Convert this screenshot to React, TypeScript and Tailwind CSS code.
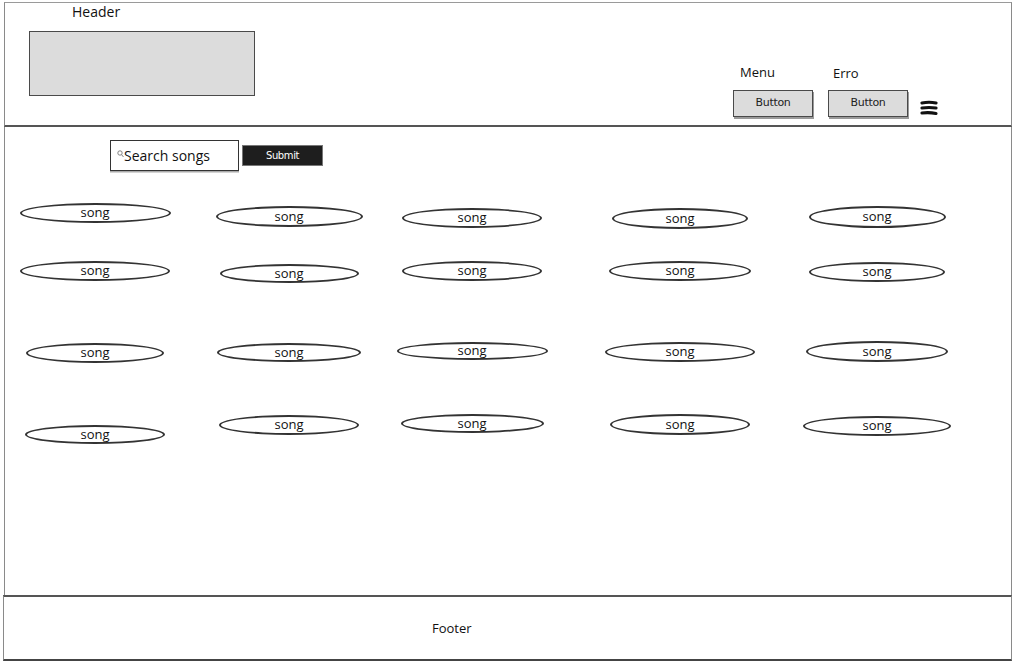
import React from "react";

type Song = { w: string; h: string; mt: string };

// cell widths chosen so each column lines up with the sketch
const cells = ["w-[180px]", "w-[208px]", "w-[158px]", "w-[258px]", "w-[136px]"];

const rows: { h: string; songs: Song[] }[] = [
	{
		h: "h-[58px]",
		songs: [
			{ w: "w-[151px]", h: "h-[20px]", mt: "mt-0" },
			{ w: "w-[147px]", h: "h-[21px]", mt: "mt-[3px]" },
			{ w: "w-[140px]", h: "h-[20px]", mt: "mt-[5px]" },
			{ w: "w-[136px]", h: "h-[21px]", mt: "mt-[5px]" },
			{ w: "w-[137px]", h: "h-[22px]", mt: "mt-[3px]" },
		],
	},
	{
		h: "h-[80px]",
		songs: [
			{ w: "w-[150px]", h: "h-[20px]", mt: "mt-0" },
			{ w: "w-[139px]", h: "h-[19px]", mt: "mt-[3px]" },
			{ w: "w-[140px]", h: "h-[20px]", mt: "mt-0" },
			{ w: "w-[142px]", h: "h-[20px]", mt: "mt-0" },
			{ w: "w-[136px]", h: "h-[20px]", mt: "mt-[1px]" },
		],
	},
	{
		h: "h-[73px]",
		songs: [
			{ w: "w-[138px]", h: "h-[20px]", mt: "mt-[2px]" },
			{ w: "w-[144px]", h: "h-[19px]", mt: "mt-[2px]" },
			{ w: "w-[151px]", h: "h-[18px]", mt: "mt-[1px]" },
			{ w: "w-[150px]", h: "h-[20px]", mt: "mt-[1px]" },
			{ w: "w-[142px]", h: "h-[21px]", mt: "mt-0" },
		],
	},
	{
		h: "h-[40px]",
		songs: [
			{ w: "w-[140px]", h: "h-[19px]", mt: "mt-[11px]" },
			{ w: "w-[140px]", h: "h-[20px]", mt: "mt-[1px]" },
			{ w: "w-[143px]", h: "h-[19px]", mt: "mt-0" },
			{ w: "w-[140px]", h: "h-[21px]", mt: "mt-0" },
			{ w: "w-[148px]", h: "h-[20px]", mt: "mt-[2px]" },
		],
	},
];

const SketchButton = ({ label }: { label: string }) => (
	<div className="w-[80px] h-[27px] flex items-center justify-center bg-[#dcdcdc] border-[1.5px] border-[#4a4a4a] shadow-[1px_2px_0_#9a9a9a] text-[11px] text-[#222] font-['DejaVu_Sans',sans-serif] tracking-[-0.3px]">
		{label}
	</div>
);

const App: React.FC = () => {
	return (
		<div className="w-[1017px] h-[672px] bg-white font-['Open_Sans',sans-serif] text-[#111]">
			<div className="ml-[4px] pt-[2px] w-[1008px]">
				{/* header */}
				<header className="h-[125px] border-t border-x border-t-[#9a9a9a] border-x-[#8a8a8a] border-b-2 border-b-[#555] flex">
					<div className="pl-[24px]">
						<p className="ml-[43px] mt-[1px] text-[14px] leading-[16px]">Header</p>
						<div className="mt-[11px] w-[226px] h-[65px] bg-[#dcdcdc] border-[1.5px] border-[#4a4a4a]" />
					</div>

					<div className="ml-auto pr-[73px] pb-[8px] flex items-end">
						<div className="flex flex-col">
							<span className="ml-[7px] mb-[10px] text-[13px] leading-[16px]">Menu</span>
							<SketchButton label="Button" />
						</div>
						<div className="ml-[15px] flex flex-col">
							<span className="ml-[5px] mb-[9px] text-[13px] leading-[16px]">Erro</span>
							<SketchButton label="Button" />
						</div>
						<svg className="ml-[12px] mb-[1px]" width="18" height="16" viewBox="0 0 18 16">
							<path d="M2 3 Q9 1.5 16 3" stroke="#111" strokeWidth="3.2" strokeLinecap="round" fill="none" />
							<path d="M2 8 Q9 7 16 8" stroke="#111" strokeWidth="3.2" strokeLinecap="round" fill="none" />
							<path d="M2 13 Q9 12 16 13.5" stroke="#111" strokeWidth="3.2" strokeLinecap="round" fill="none" />
						</svg>
					</div>
				</header>

				{/* songs */}
				<main className="h-[468px] border-x border-[#8a8a8a] pt-[13px]">
					<div className="ml-[105px] flex items-start">
						<div className="w-[129px] h-[31px] border-[1.5px] border-[#333] shadow-[0_1.5px_0_#aaa] flex items-center pl-[6px]">
							<svg width="7" height="8" viewBox="0 0 7 8" className="mt-[-3px]">
								<circle cx="3" cy="3" r="2.2" stroke="#777" strokeWidth="0.9" fill="none" />
								<path d="M4.6 4.7 L6.5 7" stroke="#777" strokeWidth="0.9" />
							</svg>
							<span className="text-[14px] leading-none">Search songs</span>
						</div>
						<button className="ml-[3px] mt-[5px] w-[81px] h-[21px] bg-[#1e1e1e] border border-[#777] text-white text-[10px] font-['DejaVu_Sans',sans-serif] tracking-[-0.4px] flex items-center justify-center">
							Submit
						</button>
					</div>

					<div className="mt-[32px]">
						{rows.map((row, ri) => (
							<div key={ri} className={`flex ${row.h}`}>
								{row.songs.map((s, si) => (
									<div key={si} className={`${cells[si]} flex justify-center items-start`}>
										<div
											className={`${s.w} ${s.h} ${s.mt} shrink-0 flex items-center justify-center rounded-[50%] border-2 border-[#333] text-[13px] leading-none pb-[1px]`}
										>
											song
										</div>
									</div>
								))}
							</div>
						))}
					</div>
				</main>

				{/* footer */}
				<footer className="-ml-[1px] w-[1009px] h-[66px] border-t-2 border-b-2 border-x border-t-[#555] border-b-[#444] border-x-[#8a8a8a] flex items-center">
					<span className="ml-[428px] text-[13px] leading-none">Footer</span>
				</footer>
			</div>
		</div>
	);
};

export default App;
